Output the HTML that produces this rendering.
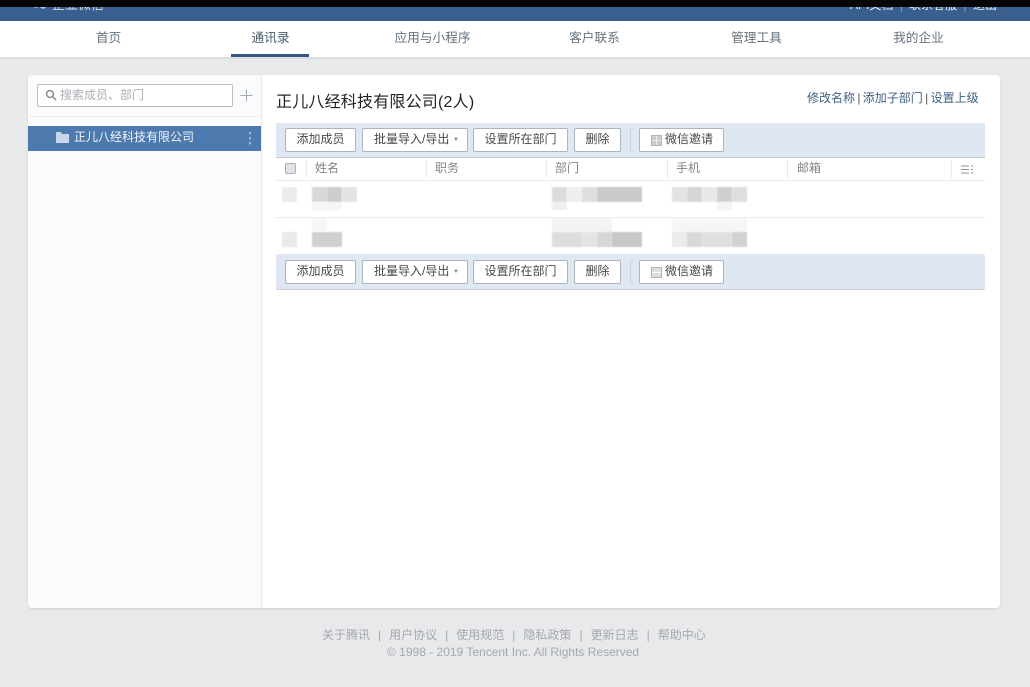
<!DOCTYPE html>
<html lang="zh">
<head>
<meta charset="utf-8">
<title>企业微信</title>
<style>
html,body{margin:0;padding:0}
body{position:relative;width:1030px;height:687px;overflow:hidden;background:#e8e9eb;font-family:"Liberation Sans","Noto Sans CJK SC",sans-serif;color:#333}
.a{position:absolute;white-space:nowrap}
.nav{top:21px;height:34px;line-height:35px;font-size:12.7px;color:#66727e;text-align:center;width:100px;margin-left:-.5px}
.btn{position:absolute;box-sizing:border-box;height:24px;line-height:20px;background:#fff;border:1px solid #aeb4bb;border-radius:2px;text-align:center;font-size:12px;color:#484848;white-space:nowrap}
.bar{position:absolute;left:276px;width:709px;background:#dfe7f3;border-bottom:1px solid #c5ccd6}
.th{position:absolute;top:160px;font-size:12px;line-height:16px;color:#858585}
.sep{position:absolute;top:160px;width:1px;height:18px;background:#e8eaed}
.b{position:absolute;height:15px;filter:blur(.6px)}
.arrow{position:absolute;left:90px;top:1px;font-size:6px;color:#888}
.qr{position:absolute;left:11px;top:6px;width:11px;height:11px;box-sizing:border-box;border:1px solid #b5b5b5;background:linear-gradient(90deg,transparent 4px,#eee 4px,#eee 5px,transparent 5px),linear-gradient(0deg,transparent 4px,#eee 4px,#eee 5px,transparent 5px),#cbcbcb}
</style>
</head>
<body>
<div class="a" style="left:0;top:7px;width:1030px;height:14px;background:#385f8e;overflow:hidden">
  <div class="a" style="left:52px;top:-11px;font-size:13px;line-height:18px;color:#d3deea">企业微信</div>
  <svg class="a" style="left:28px;top:-6px" width="24" height="14" viewBox="0 0 24 14" fill="none" stroke="#d3deea" stroke-width="1.3"><path d="M2 1c1 4 3 5 8 5"/><circle cx="15" cy="4.500" r="2.500"/></svg>
  <div class="a" style="left:850px;top:-11px;font-size:12px;line-height:18px;color:#eef2f7">API文档 <span style="color:#8ea6c2;margin:0 3px">|</span> 联系客服 <span style="color:#8ea6c2;margin:0 3px">|</span> 退出</div>
</div>
<div class="a" style="left:0;top:0;width:1030px;height:7px;background:#060606"></div>

<div class="a" style="left:0;top:21px;width:1030px;height:36px;background:#fff;border-bottom:2px solid #dcdcdc;box-sizing:content-box"></div>
<div class="a nav" style="left:59px">首页</div>
<div class="a nav" style="left:221px;color:#4a5d70">通讯录</div>
<div class="a nav" style="left:383px">应用与小程序</div>
<div class="a nav" style="left:545px">客户联系</div>
<div class="a nav" style="left:707px">管理工具</div>
<div class="a nav" style="left:869px">我的企业</div>
<div class="a" style="left:231px;top:54px;width:78px;height:3px;background:#33577f"></div>

<div class="a" style="left:28px;top:75px;width:972px;height:533px;background:#fff;border-radius:4px;box-shadow:0 1px 2px rgba(0,0,0,.1);overflow:hidden">
  <div class="a" style="left:0;top:0;width:233px;height:533px;background:#f9fbfd;border-right:1px solid #e6eaee"></div>
</div>

<div class="a" style="left:37px;top:84px;width:196px;height:23px;box-sizing:border-box;border:1px solid #b9bdc2;border-radius:2px;background:#fff"></div>
<svg class="a" style="left:45px;top:89px" width="12" height="12" viewBox="0 0 12 12" fill="none" stroke="#8c949c" stroke-width="1.600"><circle cx="5" cy="5" r="3.400"/><path d="M7.600 7.600L11 11"/></svg>
<div class="a" style="left:60px;top:87px;font-size:12px;line-height:17px;color:#a9aeb4">搜索成员、部门</div>
<svg class="a" style="left:240px;top:89px" width="13" height="13" viewBox="0 0 13 13" stroke="#a4a9ae" stroke-width="1"><path d="M6.500 .5v12M.5 6.500h12"/></svg>
<div class="a" style="left:28px;top:116px;width:233px;height:1px;background:#edf0f2"></div>

<div class="a" style="left:28px;top:126px;width:233px;height:25px;background:#4c79ae"></div>
<svg class="a" style="left:56px;top:132px" width="13" height="11" viewBox="0 0 13 11"><path d="M0 0h5l1 2h7v9H0z" fill="#c7d6e8"/></svg>
<div class="a" style="left:74px;top:128px;font-size:12px;line-height:18px;color:#f4f7fb">正儿八经科技有限公司</div>
<svg class="a" style="left:248px;top:132px" width="4" height="13" viewBox="0 0 4 13" fill="#9db8d6"><rect x="1" y="0" width="2" height="2.400"/><rect x="1" y="5" width="2" height="2.400"/><rect x="1" y="10" width="2" height="2.400"/></svg>

<div class="a" style="left:276px;top:92px;font-size:16px;line-height:22px;letter-spacing:.2px;color:#222">正儿八经科技有限公司(2人)</div>
<div class="a" style="left:807px;top:90px;font-size:12px;line-height:17px;color:#3e5f82">修改名称 <span style="color:#555;margin:0 -1px">|</span> 添加子部门 <span style="color:#555;margin:0 -1px">|</span> 设置上级</div>

<div class="bar" style="top:123px;height:34px"></div>
<div class="btn" style="left:285px;top:128px;width:71px">添加成员</div>
<div class="btn" style="left:362px;top:128px;width:106px;text-align:left;padding-left:11px">批量导入/导出<span class="arrow">▼</span></div>
<div class="btn" style="left:473px;top:128px;width:95px">设置所在部门</div>
<div class="btn" style="left:574px;top:128px;width:47px">删除</div>
<div class="a" style="left:630px;top:128px;width:1px;height:24px;background:#cbd2dc"></div>
<div class="btn" style="left:639px;top:128px;width:85px;text-align:left;padding-left:25px"><span class="qr"></span>微信邀请</div>

<div class="a" style="left:276px;top:158px;width:709px;height:22px;background:#fff;border-bottom:1px solid #e7eaee"></div>
<div class="a" style="left:285px;top:163px;width:11px;height:11px;box-sizing:border-box;border:1px solid #aab0b7;border-radius:2px;background:#dfe2e6"></div>
<div class="sep" style="left:306px"></div>
<div class="th" style="left:315px">姓名</div>
<div class="sep" style="left:426px"></div>
<div class="th" style="left:435px">职务</div>
<div class="sep" style="left:546px"></div>
<div class="th" style="left:555px">部门</div>
<div class="sep" style="left:667px"></div>
<div class="th" style="left:676px">手机</div>
<div class="sep" style="left:787px"></div>
<div class="th" style="left:797px">邮箱</div>
<div class="sep" style="left:951px"></div>
<svg class="a" style="left:961px;top:165px" width="12" height="9" viewBox="0 0 12 9" stroke="#8f959c" stroke-width="1"><path d="M0 1h8M0 4.500h8M0 8h8M10 1h2M10 4.500h2M10 8h2"/></svg>

<!-- row 1 blur -->
<div class="b" style="left:282px;top:187px;width:15px;background:#ececec"></div>
<div class="b" style="left:312px;top:187px;width:15px;background:#d8d8d8"></div>
<div class="b" style="left:327px;top:187px;width:15px;background:#cdcdcd"></div>
<div class="b" style="left:342px;top:187px;width:15px;background:#e3e3e3"></div>
<div class="b" style="left:312px;top:202px;width:30px;height:8px;background:#f5f5f5"></div>
<div class="b" style="left:552px;top:187px;width:15px;background:#dcdcdc"></div>
<div class="b" style="left:567px;top:187px;width:15px;background:#efefef"></div>
<div class="b" style="left:582px;top:187px;width:15px;background:#dedede"></div>
<div class="b" style="left:597px;top:187px;width:45px;background:#cbcbcb"></div>
<div class="b" style="left:552px;top:202px;width:15px;height:8px;background:#eeeeee"></div>
<div class="b" style="left:672px;top:187px;width:15px;background:#e3e3e3"></div>
<div class="b" style="left:687px;top:187px;width:15px;background:#d6d6d6"></div>
<div class="b" style="left:702px;top:187px;width:15px;background:#e8e8e8"></div>
<div class="b" style="left:717px;top:187px;width:15px;background:#cfcfcf"></div>
<div class="b" style="left:732px;top:187px;width:15px;background:#dedede"></div>
<div class="b" style="left:717px;top:202px;width:15px;height:8px;background:#f3f3f3"></div>
<div class="a" style="left:276px;top:217px;width:709px;height:1px;background:#e9ebee"></div>
<!-- row 2 blur -->
<div class="b" style="left:282px;top:232px;width:15px;background:#eaeaea"></div>
<div class="b" style="left:312px;top:232px;width:30px;background:#d0d0d0"></div>
<div class="b" style="left:312px;top:218px;width:15px;height:14px;background:#f6f6f6"></div>
<div class="b" style="left:552px;top:218px;width:60px;height:14px;background:#f3f3f3"></div>
<div class="b" style="left:552px;top:232px;width:30px;background:#dddddd"></div>
<div class="b" style="left:582px;top:232px;width:15px;background:#e4e4e4"></div>
<div class="b" style="left:597px;top:232px;width:15px;background:#d6d6d6"></div>
<div class="b" style="left:612px;top:232px;width:30px;background:#c8c8c8"></div>
<div class="b" style="left:672px;top:218px;width:75px;height:14px;background:#f6f6f6"></div>
<div class="b" style="left:672px;top:232px;width:15px;background:#ececec"></div>
<div class="b" style="left:687px;top:232px;width:15px;background:#d8d8d8"></div>
<div class="b" style="left:702px;top:232px;width:30px;background:#dfdfdf"></div>
<div class="b" style="left:732px;top:232px;width:15px;background:#d2d2d2"></div>

<div class="bar" style="top:254px;height:35px;border-radius:2px"></div>
<div class="btn" style="left:285px;top:260px;width:71px">添加成员</div>
<div class="btn" style="left:362px;top:260px;width:106px;text-align:left;padding-left:11px">批量导入/导出<span class="arrow">▼</span></div>
<div class="btn" style="left:473px;top:260px;width:95px">设置所在部门</div>
<div class="btn" style="left:574px;top:260px;width:47px">删除</div>
<div class="a" style="left:630px;top:260px;width:1px;height:24px;background:#cbd2dc"></div>
<div class="btn" style="left:639px;top:260px;width:85px;text-align:left;padding-left:25px"><span class="qr" style="background:linear-gradient(0deg,transparent 4px,#fff 4px,#fff 5px,transparent 5px),#ddd"></span>微信邀请</div>

<div class="a" style="left:322px;top:627px;font-size:12px;line-height:17px;color:#a4a8ad">关于腾讯<span style="margin:0 8px">|</span>用户协议<span style="margin:0 8px">|</span>使用规范<span style="margin:0 8px">|</span>隐私政策<span style="margin:0 8px">|</span>更新日志<span style="margin:0 8px">|</span>帮助中心</div>
<div class="a" style="left:387px;top:644px;font-size:12px;line-height:16px;color:#a4a8ad">© 1998 - 2019 Tencent Inc. All Rights Reserved</div>
</body>
</html>
